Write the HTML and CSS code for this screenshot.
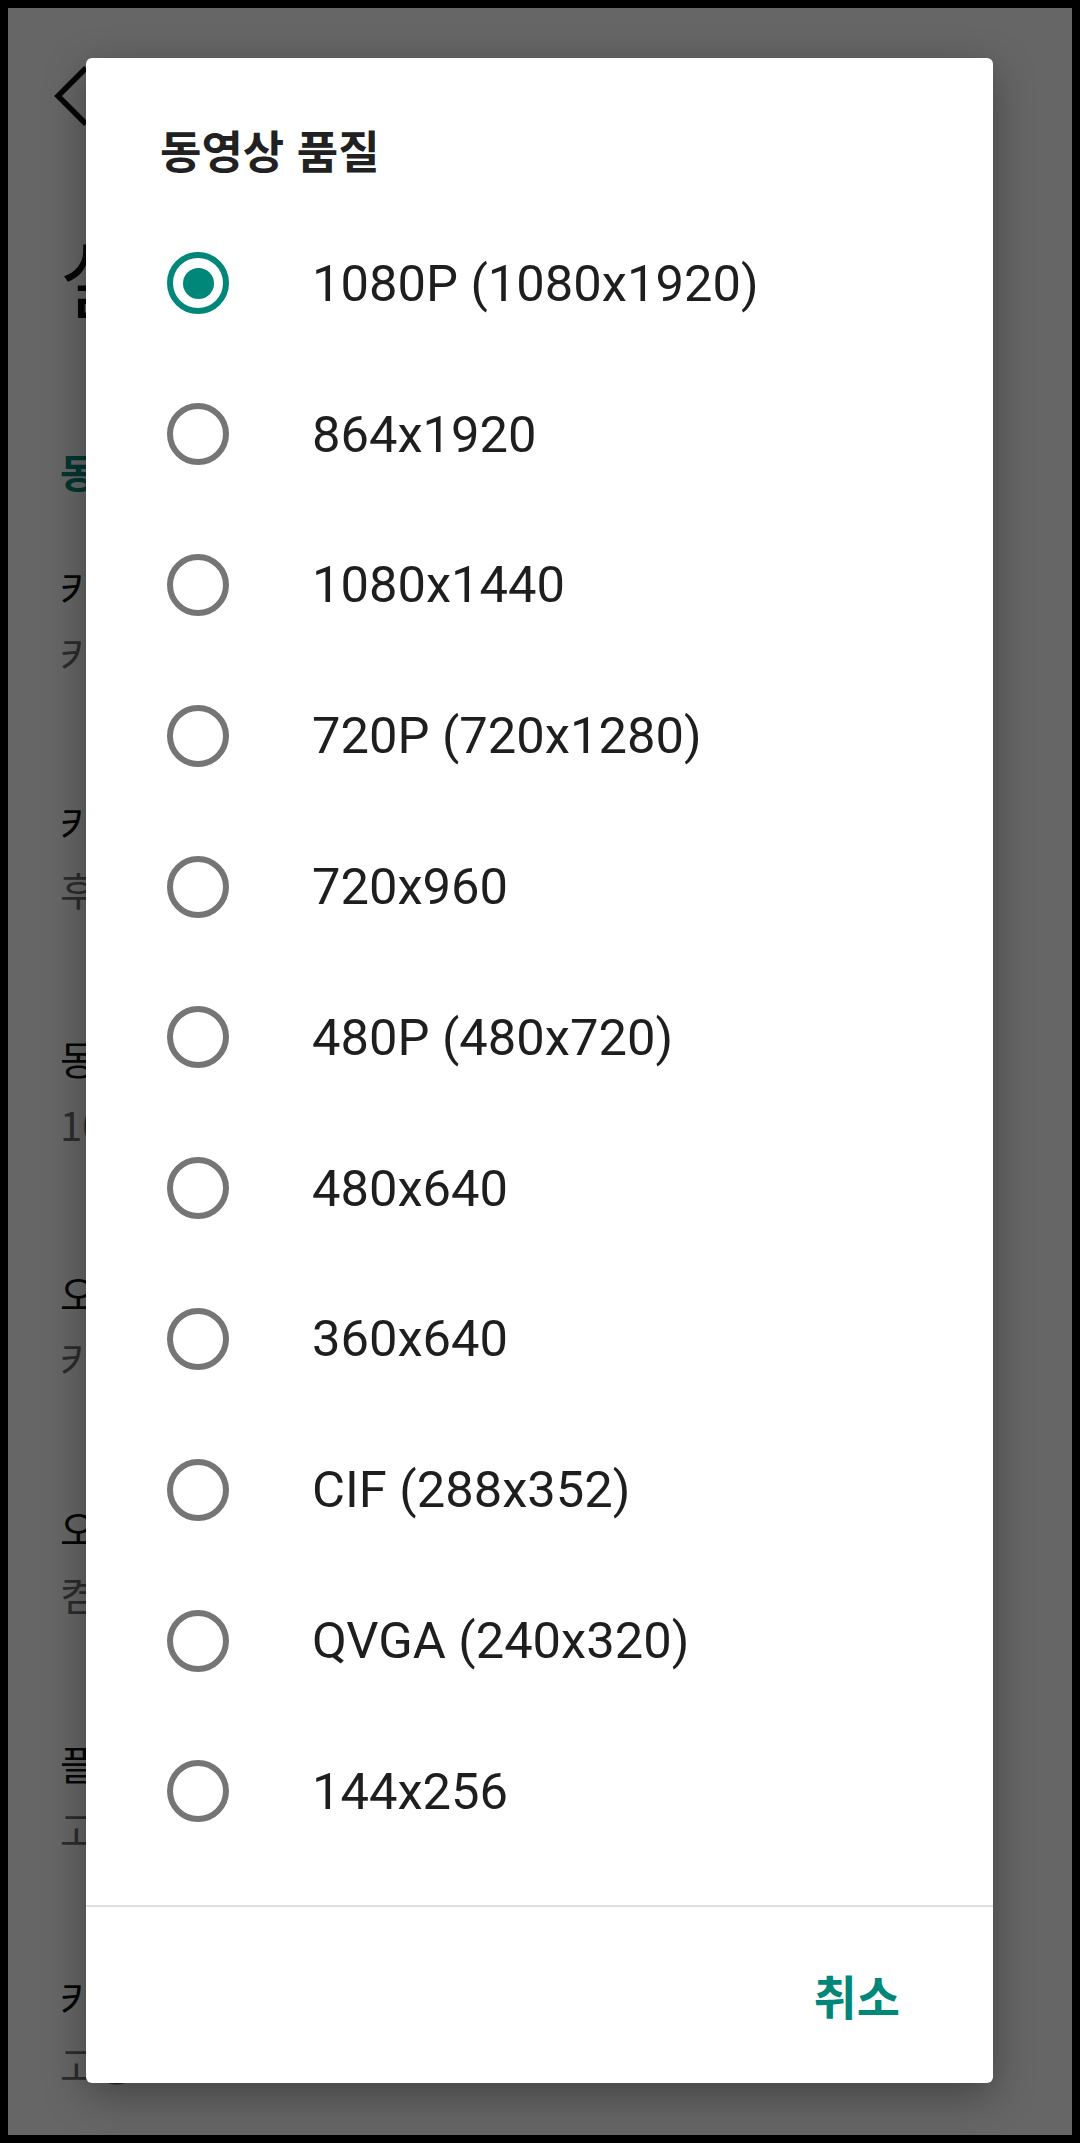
FILE: index.html
```html
<!DOCTYPE html>
<html lang="ko">
<head>
  <meta charset="UTF-8" />
  <meta name="viewport" content="width=device-width, initial-scale=1.0"/>
  <title>동영상 품질</title>
  <link rel="stylesheet" href="styles.css">
</head>
<body>

  <div class="screen">

    <!-- settings page behind the dialog -->
    <div class="settings-page">
      <div class="toolbar">
        <svg class="back-icon" width="60" height="80" viewBox="0 0 60 80">
          <polyline points="38,12 10,40 38,68" fill="none" stroke="#111" stroke-width="5.5"/>
        </svg>
        <h1 class="page-title">설정</h1>
      </div>

      <div class="section-header">동영상</div>

      <div class="pref-item">
        <div class="pref-title">카메라</div>
        <div class="pref-summary">카메라 1</div>
      </div>
      <div class="pref-item">
        <div class="pref-title">카메라 방향</div>
        <div class="pref-summary">후면 카메라</div>
      </div>
      <div class="pref-item">
        <div class="pref-title">동영상 품질</div>
        <div class="pref-summary">1080P (1080x1920)</div>
      </div>
      <div class="pref-item">
        <div class="pref-title">오디오 소스</div>
        <div class="pref-summary">카메라 마이크</div>
      </div>
      <div class="pref-item">
        <div class="pref-title">오디오 녹음</div>
        <div class="pref-summary">켬</div>
      </div>
      <div class="pref-item">
        <div class="pref-title">플래시</div>
        <div class="pref-summary">고정</div>
      </div>
      <div class="pref-item">
        <div class="pref-title">카메라 초점</div>
        <div class="pref-summary">고정</div>
      </div>
    </div>

    <div class="scrim"></div>

    <div class="dialog">
      <h2 class="dialog-title">동영상 품질</h2>

      <div class="option-list">
        <div class="option checked"><span class="radio"></span><span class="option-label">1080P (1080x1920)</span></div>
        <div class="option"><span class="radio"></span><span class="option-label">864x1920</span></div>
        <div class="option"><span class="radio"></span><span class="option-label">1080x1440</span></div>
        <div class="option"><span class="radio"></span><span class="option-label">720P (720x1280)</span></div>
        <div class="option"><span class="radio"></span><span class="option-label">720x960</span></div>
        <div class="option"><span class="radio"></span><span class="option-label">480P (480x720)</span></div>
        <div class="option"><span class="radio"></span><span class="option-label">480x640</span></div>
        <div class="option"><span class="radio"></span><span class="option-label">360x640</span></div>
        <div class="option"><span class="radio"></span><span class="option-label">CIF (288x352)</span></div>
        <div class="option"><span class="radio"></span><span class="option-label">QVGA (240x320)</span></div>
        <div class="option"><span class="radio"></span><span class="option-label">144x256</span></div>
      </div>

      <div class="dialog-divider"></div>

      <div class="dialog-actions">
        <button type="button" class="text-button">취소</button>
      </div>
    </div>

  </div>

</body>
</html>
```

FILE: styles.css
```css
body {
  margin: 0;
  padding: 8px;
  background: #000;
}

.screen {
  position: relative;
  height: 2127px;
  overflow: hidden;
  background: #fff;
  font-family: "Noto Sans CJK KR", Roboto, sans-serif;
}

/* page behind */

.settings-page {
  padding-left: 52px;
}

.toolbar {
  height: 397px;
  position: relative;
}

.back-icon {
  display: block;
  position: absolute;
  left: -12px;
  top: 48px;
}

.page-title {
  margin: 0;
  padding-top: 218px;
  font-size: 84px;
  font-weight: 400;
  line-height: 100px;
  color: #111;
}

.section-header {
  margin-top: 42px;
  font-size: 40px;
  line-height: 48px;
  font-weight: 700;
  color: #00897b;
}

.pref-item {
  padding: 69px 0 52px;
}

.pref-title {
  font-size: 40px;
  line-height: 48px;
  color: #111;
}

.pref-summary {
  margin-top: 18px;
  font-size: 40px;
  line-height: 48px;
  color: #6f6f6f;
}

.scrim {
  position: absolute;
  inset: 0;
  background: rgba(0, 0, 0, 0.6);
}

/* dialog */

.dialog {
  position: absolute;
  left: 78px;
  top: 50px;
  width: 907px;
  height: 2025px;
  background: #fff;
  border-radius: 6px;
  box-shadow: 0 12px 40px rgba(0, 0, 0, 0.35);
  display: flex;
  flex-direction: column;
}

.dialog-title {
  margin: 0;
  padding: 69px 0 0 74px;
  height: 81px;
  font-size: 45px;
  line-height: 45px;
  font-weight: 700;
  color: #212121;
}

.option-list {
  display: flex;
  flex-direction: column;
}

.option {
  height: 150.8px;
  display: flex;
  align-items: center;
  padding-left: 81px;
}

.radio {
  width: 62px;
  height: 62px;
  box-sizing: border-box;
  border: 6px solid #757575;
  border-radius: 50%;
  display: flex;
  align-items: center;
  justify-content: center;
  flex-shrink: 0;
}

.option.checked .radio {
  border-color: #00877a;
}

.option.checked .radio::after {
  content: "";
  width: 31px;
  height: 31px;
  border-radius: 50%;
  background: #00877a;
}

.option-label {
  margin-left: 83px;
  font-family: Roboto, "Noto Sans CJK KR", sans-serif;
  font-size: 50.7px;
  color: #1e1e1e;
}

.dialog-divider {
  margin-top: 38px;
  height: 2px;
  background: #e0e0e0;
}

.dialog-actions {
  flex: 1;
  display: flex;
  align-items: center;
  justify-content: flex-end;
  padding-right: 93px;
}

.text-button {
  border: none;
  background: none;
  padding: 0;
  font-family: "Noto Sans CJK KR", sans-serif;
  font-size: 47px;
  font-weight: 700;
  color: #00877a;
  cursor: pointer;
}
```
